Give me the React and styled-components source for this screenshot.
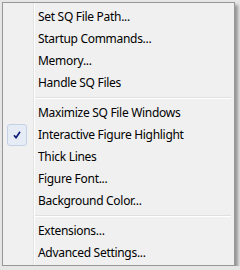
import styled, { createGlobalStyle } from "styled-components";

const GlobalStyle = createGlobalStyle`
  html, body {
    margin: 0;
    background: #e6e6e6;
  }
  body {
    font-family: "Noto Sans", "Open Sans", sans-serif;
    font-size: 12px;
    color: #000;
  }
`;

const menuItems = [
  { label: "Set SQ File Path..." },
  { label: "Startup Commands..." },
  { label: "Memory..." },
  { label: "Handle SQ Files" },
  { separator: true },
  { label: "Maximize SQ File Windows" },
  { label: "Interactive Figure Highlight", checked: true },
  { label: "Thick Lines" },
  { label: "Figure Font..." },
  { label: "Background Color..." },
  { separator: true },
  { label: "Extensions..." },
  { label: "Advanced Settings..." },
];

const CheckMark = () => (
  <svg width="8" height="8" viewBox="0 0 8 8">
    <path
      d="M1 4.2 L3 6.8 L7 0.8"
      fill="none"
      stroke="#10207a"
      strokeWidth="1.7"
      strokeLinejoin="round"
    />
  </svg>
);

const PopupMenu = () => {
  return (
    <Menu>
      {menuItems.map((item, index) => {
        if (item.separator) return <Separator key={index} />;
        return (
          <Item key={index}>
            <CheckCell $checked={item.checked}>
              {item.checked && <CheckMark />}
            </CheckCell>
            <Label>{item.label}</Label>
          </Item>
        );
      })}
    </Menu>
  );
};

export default function App() {
  return (
    <>
      <GlobalStyle />
      <PopupMenu />
    </>
  );
}

const Menu = styled.div`
  margin: 2px 0 0 2px;
  padding: 3px 2px 1px;
  box-sizing: content-box;
  width: 227px;
  border: 1px solid #979797;
  background-color: #f0f0f0;
  background-image: linear-gradient(
    to right,
    transparent 30px,
    #e2e3e3 30px,
    #e2e3e3 31px,
    #ffffff 31px,
    #ffffff 32px,
    transparent 32px
  );
  background-repeat: no-repeat;
  box-shadow: 3px 3px 3px rgba(0, 0, 0, 0.35);
`;

const Item = styled.div`
  display: grid;
  grid-template-columns: 20px 1fr;
  column-gap: 11px;
  align-items: center;
  height: 22px;
  padding-left: 2px;
  white-space: nowrap;
`;

const CheckCell = styled.div`
  height: 20px;
  display: flex;
  align-items: center;
  justify-content: center;
  border-radius: 3px;
  border: 1px solid ${(p) => (p.$checked ? "#c3d0e8" : "transparent")};
  background: ${(p) => (p.$checked ? "#e6ecf6" : "transparent")};
`;

const Label = styled.span`
  line-height: 22px;
  letter-spacing: -0.3px;
`;

const Separator = styled.div`
  margin: 3px 1px 3px 30px;
  border-top: 1px solid #e0e0e0;
  border-bottom: 1px solid #ffffff;
  height: 0;
`;
